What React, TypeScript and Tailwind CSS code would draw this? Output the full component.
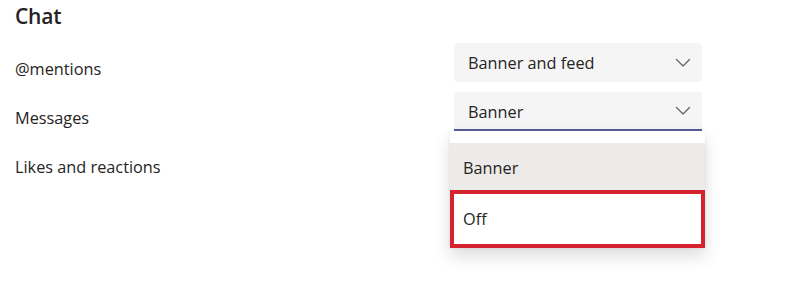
import React from "react";

function Chevron() {
  return (
    <svg width="16" height="10" viewBox="0 0 16 10" fill="none" className="text-[#616161]">
      <path d="M1.5 1.5 L8 8 L14.5 1.5" stroke="currentColor" strokeWidth="1.2" strokeLinecap="round" strokeLinejoin="round" />
    </svg>
  );
}

export default function App() {
  return (
    <div className="w-[786px] h-[290px] bg-white overflow-hidden text-[#252423] font-['Open_Sans',sans-serif] relative">
      <div className="pl-[15px] pt-[1px] text-[21px] font-semibold leading-[30px] tracking-[-0.2px]">Chat</div>
      <div className="mt-[12px] flex flex-col gap-[10px]">
        <div className="flex items-start h-[39px]">
          <div className="w-[454px] pl-[15px] pt-[15px] text-[16.3px] leading-[22px]">@mentions</div>
          <div className="w-[248px] h-[39px] bg-[#f5f5f5] rounded-[4px] flex items-center justify-between pl-[14px] pr-[11px] text-[16.3px]">
            <span className="pt-[2px]">Banner and feed</span>
            <Chevron />
          </div>
        </div>
        <div className="flex items-start h-[39px]">
          <div className="w-[454px] pl-[15px] pt-[15px] text-[16.3px] leading-[22px]">Messages</div>
          <div className="relative w-[248px] h-[39px]">
            <div className="w-full h-full bg-[#f5f5f5] rounded-t-[4px] border-b-2 border-[#5b5e9a] flex items-center justify-between pl-[14px] pr-[11px] text-[16.3px]">
              <span className="pt-[3px]">Banner</span>
              <Chevron />
            </div>
            <div className="absolute left-[-4px] top-[39px] w-[255px] bg-white pt-[12px] shadow-[0_8px_16px_rgba(0,0,0,0.14),0_0_3px_rgba(0,0,0,0.08)] z-10">
              <div className="h-[47px] bg-[#edebe9] flex items-center pl-[13px] pt-[3px] text-[16.3px]">Banner</div>
              <div className="h-[58px] border-[4px] border-[#d6222e] flex items-center pl-[9px] text-[16.3px]">Off</div>
            </div>
          </div>
        </div>
        <div className="flex items-start h-[39px]">
          <div className="w-[454px] pl-[15px] pt-[15px] text-[16.3px] leading-[22px]">Likes and reactions</div>
        </div>
      </div>
    </div>
  );
}
